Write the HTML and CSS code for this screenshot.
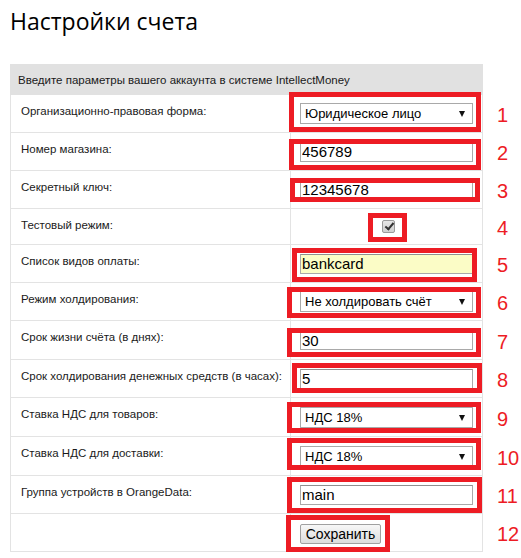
FILE: index.html
```html
<!DOCTYPE html>
<html lang="ru">
<head>
  <meta charset="UTF-8" />
  <title>Настройки счета</title>
  <link rel="stylesheet" href="styles.css">
</head>
<body>
  <div class="page">
    <h1>Настройки счета</h1>

    <table class="settings">
      <colgroup>
        <col class="col-label">
        <col class="col-field">
        <col class="col-num">
      </colgroup>
      <thead>
        <tr>
          <th colspan="2">Введите параметры вашего аккаунта в системе IntellectMoney</th>
          <th class="num"></th>
        </tr>
      </thead>
      <tbody>
        <tr>
          <td class="label">Организационно-правовая форма:</td>
          <td class="field">
            <div class="select"><select><option>Юридическое лицо</option><option>Индивидуальный предприниматель</option></select></div>
          </td>
          <td class="num">1</td>
        </tr>
        <tr>
          <td class="label">Номер магазина:</td>
          <td class="field"><input type="text" value="456789"></td>
          <td class="num">2</td>
        </tr>
        <tr>
          <td class="label">Секретный ключ:</td>
          <td class="field"><input type="text" value="12345678"></td>
          <td class="num">3</td>
        </tr>
        <tr class="short">
          <td class="label">Тестовый режим:</td>
          <td class="field center"><input type="checkbox" class="check" checked></td>
          <td class="num">4</td>
        </tr>
        <tr>
          <td class="label">Список видов оплаты:</td>
          <td class="field"><input type="text" class="filled" value="bankcard"></td>
          <td class="num">5</td>
        </tr>
        <tr>
          <td class="label">Режим холдирования:</td>
          <td class="field">
            <div class="select"><select><option>Не холдировать счёт</option><option>Холдировать счёт</option></select></div>
          </td>
          <td class="num">6</td>
        </tr>
        <tr class="tall">
          <td class="label">Срок жизни счёта (в днях):</td>
          <td class="field"><input type="text" value="30"></td>
          <td class="num">7</td>
        </tr>
        <tr>
          <td class="label">Срок холдирования денежных средств (в часах):</td>
          <td class="field"><input type="text" value="5"></td>
          <td class="num">8</td>
        </tr>
        <tr class="tall">
          <td class="label">Ставка НДС для товаров:</td>
          <td class="field">
            <div class="select"><select><option>НДС 18%</option><option>НДС 10%</option><option>Без НДС</option></select></div>
          </td>
          <td class="num">9</td>
        </tr>
        <tr class="tall">
          <td class="label">Ставка НДС для доставки:</td>
          <td class="field">
            <div class="select"><select><option>НДС 18%</option><option>НДС 10%</option><option>Без НДС</option></select></div>
          </td>
          <td class="num">10</td>
        </tr>
        <tr>
          <td class="label">Группа устройств в OrangeData:</td>
          <td class="field"><input type="text" value="main"></td>
          <td class="num">11</td>
        </tr>
        <tr>
          <td class="label"></td>
          <td class="field"><button type="button">Сохранить</button></td>
          <td class="num">12</td>
        </tr>
      </tbody>
    </table>

    <!-- красные рамки-пометки поверх формы -->
    <div class="mark m1"></div>
    <div class="mark m2"></div>
    <div class="mark m3"></div>
    <div class="mark m4"></div>
    <div class="mark m5"></div>
    <div class="mark m6"></div>
    <div class="mark m7"></div>
    <div class="mark m8"></div>
    <div class="mark m9"></div>
    <div class="mark m10"></div>
    <div class="mark m11"></div>
    <div class="mark m12"></div>
  </div>
</body>
</html>
```

FILE: styles.css
```css
body {
  margin: 0;
  background: #fff;
  font-family: "Liberation Sans", Arial, sans-serif;
  color: #1a1a1a;
}
.page {
  position: relative;
  padding: 0 10px;
  height: 558px;
}
h1 {
  margin: 0;
  padding-top: 5px;
  height: 59px;
  font-family: "Open Sans", sans-serif;
  font-weight: normal;
  font-size: 23px;
  line-height: 32px;
  color: #000;
}
.settings {
  border-collapse: collapse;
  table-layout: fixed;
  width: 511px;
  font-size: 11.5px;
}
.col-label { width: 280px; }
.col-field { width: 192px; }
.col-num { width: 39px; }
.settings th {
  box-sizing: border-box;
  height: 30px;
  padding: 0 7px;
  background: #e1e1e1;
  border: 1px solid #e1e1e1;
  text-align: left;
  font-weight: normal;
  color: #1a1a1a;
  white-space: nowrap;
}
.settings td {
  box-sizing: border-box;
  height: 38px;
  border: 1px solid #e3e3e3;
}
.settings tr.short td {
  height: 36px;
}
.settings tr.tall td {
  height: 39px;
}
.settings .num {
  border: none;
  border-left: 1px solid #e3e3e3;
  background: #fff;
  padding: 3px 0 0 14px;
  font-size: 20px;
  line-height: 22px;
  color: #ed1c24;
  vertical-align: middle;
}
.settings th.num {
  padding: 0;
  border: none;
  background: #fff;
}
.label {
  padding: 10px 0 0 10px;
  vertical-align: top;
  white-space: nowrap;
  overflow: visible;
}
.field {
  padding: 0 0 0 9px;
  vertical-align: middle;
}
.center {
  text-align: center;
  padding: 0;
}
input[type="text"] {
  box-sizing: border-box;
  width: 173px;
  height: 20px;
  margin: 0;
  padding: 0 1px;
  border: 1px solid #a9a9a9;
  border-top-color: #8f8f8f;
  font-family: "Liberation Sans", Arial, sans-serif;
  font-size: 15px;
  color: #000;
  background: #fff;
  display: block;
}
input.filled {
  background: #fbfcc6;
}
.select {
  position: relative;
  width: 173px;
}
.select select {
  appearance: none;
  -webkit-appearance: none;
  box-sizing: border-box;
  display: block;
  width: 173px;
  height: 21px;
  margin: 0;
  padding: 0 0 0 4px;
  border: 1px solid #a9a9a9;
  border-radius: 0;
  background: #fff;
  font-family: "Liberation Sans", Arial, sans-serif;
  font-size: 13px;
  color: #000;
}
.select::after {
  content: "";
  position: absolute;
  right: 8px;
  top: 8px;
  border-left: 3px solid transparent;
  border-right: 3px solid transparent;
  border-top: 6px solid #111;
}
.check {
  appearance: none;
  -webkit-appearance: none;
  position: relative;
  width: 13px;
  height: 13px;
  margin: 0 0 0 4px;
  border: 1px solid #9a9a9a;
  border-radius: 2px;
  background: linear-gradient(#e6e6e6, #cfcfcf);
  vertical-align: middle;
}
.check:checked::after {
  content: "";
  position: absolute;
  left: 4px;
  top: 0;
  width: 3px;
  height: 7px;
  border: solid #333;
  border-width: 0 2px 2px 0;
  transform: rotate(40deg);
}
button {
  box-sizing: border-box;
  width: 81px;
  height: 20px;
  margin-top: 3px;
  padding: 0;
  border: 1px solid #a0a0a0;
  border-radius: 2px;
  background: linear-gradient(#f7f7f7, #dcdcdc);
  font-family: "Liberation Sans", Arial, sans-serif;
  font-size: 14px;
  color: #000;
  cursor: pointer;
}
.mark {
  position: absolute;
  box-sizing: border-box;
  border: 5px solid #ed1c24;
}
.m1 { left: 289px; top: 92px; width: 192px; height: 40px; }
.m2 { left: 289px; top: 139px; width: 192px; height: 31px; }
.m3 { left: 290px; top: 178px; width: 190px; height: 24px; }
.m4 { left: 368px; top: 213px; width: 39px; height: 29px; }
.m5 { left: 292px; top: 248px; width: 185px; height: 34px; }
.m6 { left: 287px; top: 287px; width: 194px; height: 31px; }
.m7 { left: 287px; top: 328px; width: 194px; height: 29px; }
.m8 { left: 292px; top: 363px; width: 190px; height: 30px; }
.m9 { left: 287px; top: 402px; width: 194px; height: 31px; }
.m10 { left: 287px; top: 438px; width: 194px; height: 32px; }
.m11 { left: 287px; top: 477px; width: 195px; height: 36px; }
.m12 { left: 286px; top: 515px; width: 104px; height: 37px; }
```
